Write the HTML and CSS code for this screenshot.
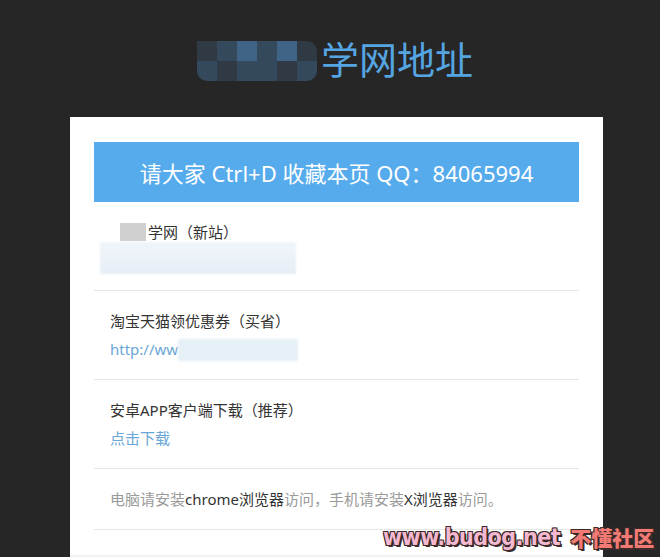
FILE: index.html
```html
<!DOCTYPE html>
<html lang="zh-CN">
<head>
    <meta charset="UTF-8">
    <meta name="viewport" content="width=device-width, initial-scale=1.0">
    <title>学网地址</title>
    <link rel="stylesheet" href="styles.css">
</head>
<body>
    <header class="header">
        <div class="mosaic">
            <span class="m1"></span><span class="m2"></span><span class="m3"></span><span class="m2"></span><span class="m3"></span><span class="m1"></span>
            <span class="m2"></span><span class="m1"></span><span class="m2"></span><span class="m2"></span><span class="m1"></span><span class="m2"></span>
        </div>
        <h1 class="title">学网地址</h1>
    </header>

    <div class="card">
        <div class="banner">请大家 Ctrl+D 收藏本页 QQ：84065994</div>

        <div class="item">
            <div class="item-title"><span class="blur-gray"></span>学网（新站）</div>
            <div class="item-link"><span class="blur-blue wide"></span></div>
        </div>

        <div class="item">
            <div class="item-title">淘宝天猫领优惠券（买省）</div>
            <div class="item-link">http://ww<span class="blur-blue"></span></div>
        </div>

        <div class="item">
            <div class="item-title">安卓APP客户端下载（推荐）</div>
            <div class="item-link">点击下载</div>
        </div>

        <div class="item tip">
            电脑请安装<span class="dark">chrome浏览器</span>访问，手机请安装<span class="dark">X浏览器</span>访问。
        </div>

        <div class="card-foot"></div>
    </div>

    <div class="watermark"><span class="wm-url">www.budog.net</span><span class="wm-name">不懂社区</span></div>
</body>
</html>
```

FILE: styles.css
```css
body {
    margin: 0;
    background-color: #262626;
    font-family: "Noto Sans", "Noto Sans CJK SC", sans-serif;
    height: 557px;
    overflow: hidden;
    position: relative;
}

.header {
    height: 117px;
    display: flex;
    justify-content: center;
    align-items: center;
    padding-left: 10px;
    box-sizing: border-box;
}

.mosaic {
    display: grid;
    grid-template-columns: repeat(6, 20px);
    grid-template-rows: repeat(2, 20px);
    border-radius: 0 10px 10px 10px;
    overflow: hidden;
    margin-top: 4px;
    margin-right: 4px;
}

.mosaic .m1 { background: #2f3a45; }
.mosaic .m2 { background: #34495c; }
.mosaic .m3 { background: #3f6488; }

.title {
    margin: 0;
    font-size: 38px;
    font-weight: normal;
    color: #55a5e2;
    line-height: 1;
}

.card {
    width: 533px;
    margin: 0 auto 0 70px;
    background: #fff;
    padding: 25px 24px 0;
    box-sizing: border-box;
}

.banner {
    height: 60px;
    background: #56abec;
    color: #fff;
    font-size: 22px;
    display: flex;
    align-items: center;
    justify-content: center;
}

.item {
    padding: 16px 16px;
    border-bottom: 1px solid #e6e6e6;
    font-size: 15px;
    line-height: 28px;
    color: #333;
}

.item-link {
    color: #6aa6d6;
    height: 28px;
}

.blur-gray {
    display: inline-block;
    width: 26px;
    height: 18px;
    background: #d0d0d0;
    vertical-align: -3px;
    margin-left: 10px;
    margin-right: 2px;
}

.blur-blue {
    display: inline-block;
    width: 120px;
    height: 22px;
    background: #e6f0f7;
    vertical-align: -6px;
    filter: blur(1px);
}

.blur-blue.wide {
    width: 196px;
    height: 32px;
    margin-left: -10px;
    margin-top: -4px;
    vertical-align: top;
    background: linear-gradient(#f0f5fa, #e6eff6);
}

.tip {
    color: #9a9a9a;
}

.tip .dark {
    color: #333;
}

.card-foot {
    height: 25px;
    border-bottom: 6px solid #f2f2f2;
    margin: 0 -24px;
}

.watermark {
    position: absolute;
    left: 383px;
    top: 523px;
    display: flex;
    gap: 10px;
    align-items: center;
    font-weight: bold;
    font-size: 23px;
    line-height: 28px;
    white-space: nowrap;
    text-shadow: 1px 1px 0 #3a2a2a, -1px -1px 0 #3a2a2a, 1px -1px 0 #3a2a2a, -1px 1px 0 #3a2a2a, 2px 2px 0 #3a2a2a;
}

.wm-url {
    color: #f4b8d0;
    font-family: "DejaVu Sans Condensed", "DejaVu Sans", sans-serif;
    letter-spacing: -0.5px;
}

.wm-name {
    color: #f27a74;
    font-family: "Noto Sans CJK SC", sans-serif;
    font-size: 21px;
    font-weight: 900;
}
```
